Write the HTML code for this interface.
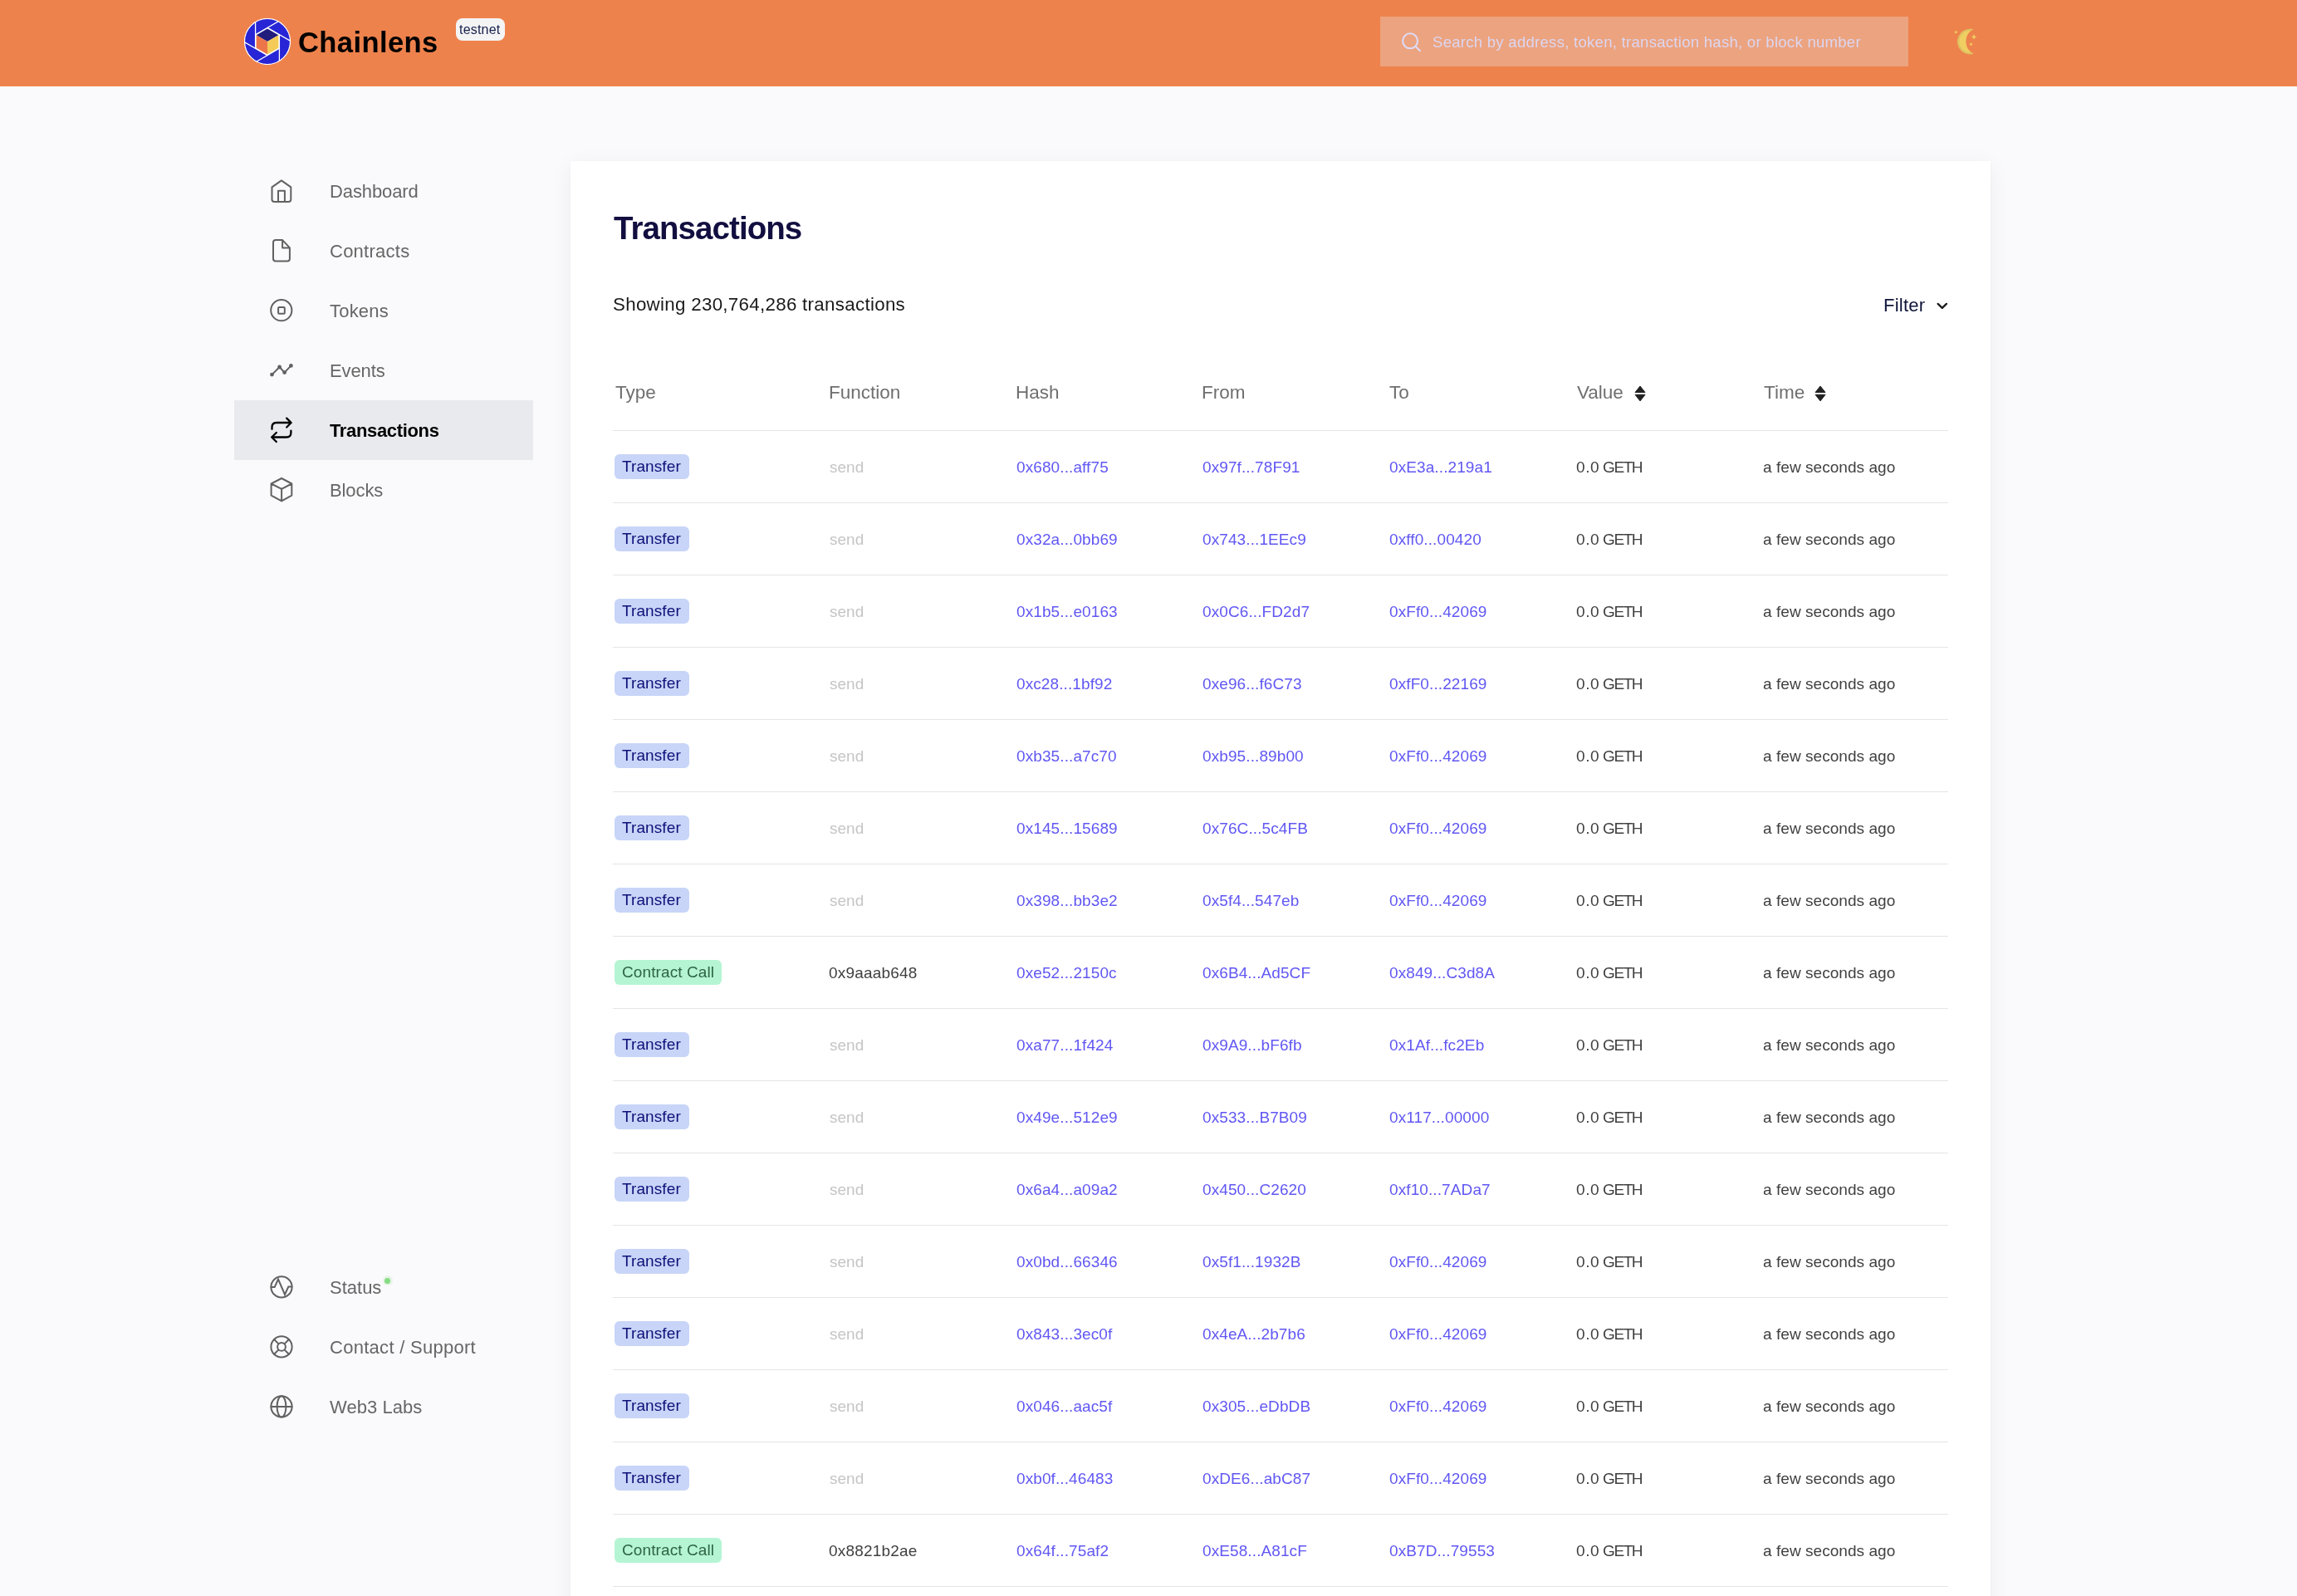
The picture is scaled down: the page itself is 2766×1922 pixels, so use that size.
<!DOCTYPE html>
<html><head><meta charset="utf-8"><title>Chainlens - Transactions</title>
<style>
html,body{margin:0;padding:0;}
body{-webkit-font-smoothing:antialiased;width:2766px;height:1922px;overflow:hidden;position:relative;background:#FAFAFC;font-family:"Liberation Sans", sans-serif;}
.abs{position:absolute;}
.t{position:absolute;white-space:nowrap;will-change:transform;}
#hdr{position:absolute;left:0;top:0;width:2766px;height:104px;background:#EE824C;}
#card{position:absolute;left:687px;top:194px;width:1710px;height:1800px;background:#fff;box-shadow:0 6px 26px rgba(20,20,50,0.055), 0 1px 3px rgba(0,0,0,0.03);}
@media (max-width:1500px){html{zoom:0.5;}}
@media (min-width:1501px) and (max-width:2000px){html{zoom:0.666667;}}
</style></head>
<body>
<div id="hdr"></div>
<svg class="abs" style="left:294px;top:22px" width="56" height="56" viewBox="0 0 56 56">
<defs><clipPath id="cc"><circle cx="28" cy="28" r="27.3"/></clipPath></defs>
<circle cx="28" cy="28" r="27.5" fill="#2725D5" stroke="#fff" stroke-width="1.2"/>
<g clip-path="url(#cc)" stroke="#fff" stroke-width="1.3" fill="none">
<polygon points="28,11.4 42.4,19.7 42.4,36.3 28,44.6 13.6,36.3 13.6,19.7" fill="#fff" stroke="none"/>
<polygon points="28,12.5 41.5,20.2 28,28 14.5,20.2" fill="#221C7C" stroke="none"/>
<polygon points="14.5,20.2 28,28 28,43.6 14.5,35.8" fill="#EC7649" stroke="none"/>
<polygon points="41.5,20.2 28,28 28,43.6 41.5,35.8" fill="#F4CB56" stroke="none"/>
<line x1="13.6" y1="36.3" x2="13.6" y2="-5"/>
<line x1="13.6" y1="19.7" x2="60" y2="-7.1"/>
<line x1="28" y1="11.4" x2="70" y2="35.65"/>
<line x1="42.4" y1="19.7" x2="42.4" y2="61"/>
<line x1="42.4" y1="36.3" x2="-4" y2="63.1"/>
<line x1="28" y1="44.6" x2="-14" y2="20.35"/>
</g>
</svg>
<div class="t" style="left:358.80px;top:33.88px;font-size:34.5px;line-height:34.5px;font-weight:700;color:#000;letter-spacing:0.42px;">Chainlens</div>
<div class="abs" style="left:549px;top:22px;width:59px;height:27px;border-radius:8px;background:#F4F4F5"></div>
<div class="t" style="left:553.30px;top:28.40px;font-size:16px;line-height:16px;font-weight:400;color:#16204A;letter-spacing:0.2px;">testnet</div>
<div class="abs" style="left:1662px;top:20px;width:636px;height:60px;background:#ECA37F"></div>
<svg class="abs" style="left:1680px;top:30px" width="40" height="40" viewBox="0 0 40 40">
<circle cx="18.1" cy="19.3" r="9" fill="none" stroke="#DEDBF5" stroke-width="2.1"/>
<line x1="24.6" y1="25.8" x2="30" y2="31.2" stroke="#DEDBF5" stroke-width="2.1" stroke-linecap="round"/>
</svg>
<div class="t" style="left:1725.00px;top:42.07px;font-size:18.5px;line-height:18.5px;font-weight:400;color:#DCD6F1;letter-spacing:0.29px;">Search by address, token, transaction hash, or block number</div>
<svg class="abs" style="left:2340px;top:25px" width="55" height="50" viewBox="0 0 55 50">
<defs><clipPath id="mc"><path d="M36.3 10.35 A15.23 15.23 0 1 0 36.5 39.75 A16.45 16.45 0 0 1 36.3 10.35 Z"/></clipPath></defs><path d="M36.3 10.35 A15.23 15.23 0 1 0 36.5 39.75 A16.45 16.45 0 0 1 36.3 10.35 Z" fill="#EFCF62"/><circle cx="32.4" cy="25.05" r="15.3" fill="none" stroke="#D9BC62" stroke-width="4.2" clip-path="url(#mc)" opacity="0.85"/>
<path d="M15.3 11.6 l0.8 1.4 l1.4 0.8 l-1.4 0.8 l-0.8 1.4 l-0.8 -1.4 l-1.4 -0.8 l1.4 -0.8 Z" fill="#EFCF62"/>
<path d="M37 16.1 l1 2.3 l2.3 1 l-2.3 1 l-1 2.3 l-1 -2.3 l-2.3 -1 l2.3 -1 Z" fill="#EFCF62"/>
<path d="M33.4 25.9 l0.8 1.5 l1.5 0.8 l-1.5 0.8 l-0.8 1.5 l-0.8 -1.5 l-1.5 -0.8 l1.5 -0.8 Z" fill="#EFCF62"/>
</svg>
<div class="abs" style="left:282px;top:482px;width:360px;height:72px;background:#E9EAEE"></div>
<svg class="abs" style="left:315px;top:205px" width="50" height="50" viewBox="0 0 50 50" fill="none" stroke="#616161" stroke-width="2" stroke-linecap="round" stroke-linejoin="round"><path d="M12.5 20.4 L23.9 12.4 L35.3 20.4 V35 Q35.3 37.9 32.4 37.9 H15.4 Q12.5 37.9 12.5 35 Z M20 37.9 V24.8 H27.9 V37.9"/></svg>
<div class="t" style="left:396.50px;top:220.10px;font-size:22px;line-height:22px;font-weight:400;color:#666;letter-spacing:-0.1px;">Dashboard</div>
<svg class="abs" style="left:315px;top:277px" width="50" height="50" viewBox="0 0 50 50" fill="none" stroke="#616161" stroke-width="2" stroke-linecap="round" stroke-linejoin="round"><path d="M25.1 12.1 H17 Q14 12.1 14 15.1 V34.6 Q14 37.6 17 37.6 H30.9 Q33.9 37.6 33.9 34.6 V21.4 Z M25.1 12.1 V21.4 H33.9"/></svg>
<div class="t" style="left:396.50px;top:292.10px;font-size:22px;line-height:22px;font-weight:400;color:#666;letter-spacing:0.25px;">Contracts</div>
<svg class="abs" style="left:315px;top:349px" width="50" height="50" viewBox="0 0 50 50" fill="none" stroke="#616161" stroke-width="2" stroke-linecap="round" stroke-linejoin="round"><circle cx="23.8" cy="24.7" r="12.6"/><rect x="20.1" y="21.05" width="7.7" height="7.7" rx="1"/></svg>
<div class="t" style="left:396.50px;top:364.10px;font-size:22px;line-height:22px;font-weight:400;color:#666;letter-spacing:0.2px;">Tokens</div>
<svg class="abs" style="left:315px;top:421px" width="50" height="50" viewBox="0 0 50 50" fill="none" stroke="#616161" stroke-width="2" stroke-linecap="round" stroke-linejoin="round"><path d="M12.5 30.1 L21.6 21 L27.6 27.6 L35.4 19.4"/><circle cx="12.5" cy="30.1" r="1.4" fill="#616161"/><circle cx="21.6" cy="21" r="1.4" fill="#616161"/><circle cx="27.6" cy="27.6" r="1.4" fill="#616161"/><circle cx="35.4" cy="19.4" r="1.4" fill="#616161"/></svg>
<div class="t" style="left:396.50px;top:436.10px;font-size:22px;line-height:22px;font-weight:400;color:#666;letter-spacing:-0.1px;">Events</div>
<svg class="abs" style="left:315px;top:493px" width="50" height="50" viewBox="0 0 50 50" fill="none" stroke="#000" stroke-width="2.3" stroke-linecap="round" stroke-linejoin="round"><path d="M12.5 23.8 V21.5 Q12.5 16 18 16 H35.5 M30.2 10.6 L35.6 16 L30.2 21.5 M35.4 25.7 V28 Q35.4 33.5 30 33.5 H12.2 M17.8 28 L12.2 33.5 L17.8 39"/></svg>
<div class="t" style="left:396.50px;top:508.10px;font-size:22px;line-height:22px;font-weight:700;color:#000;letter-spacing:-0.35px;">Transactions</div>
<svg class="abs" style="left:315px;top:565px" width="50" height="50" viewBox="0 0 50 50" fill="none" stroke="#616161" stroke-width="2" stroke-linecap="round" stroke-linejoin="round"><path d="M24.1 11 L36.3 17.5 V31.6 L24.1 38.4 L11.6 31.6 V17.5 Z M11.6 17.5 L24.1 23.8 L36.3 17.5 M24.1 23.8 V38.4"/></svg>
<div class="t" style="left:396.50px;top:580.10px;font-size:22px;line-height:22px;font-weight:400;color:#666;letter-spacing:-0.1px;">Blocks</div>
<svg class="abs" style="left:315px;top:1525px" width="50" height="50" viewBox="0 0 50 50" fill="none" stroke="#616161" stroke-width="2" stroke-linecap="round" stroke-linejoin="round"><circle cx="24" cy="24.9" r="12.6"/><path d="M11.5 24.9 H15.7 L20 15.5 L28 34 L32.3 24.5 H36.5" stroke-linejoin="miter"/></svg>
<div class="t" style="left:396.50px;top:1540.10px;font-size:22px;line-height:22px;font-weight:400;color:#666;letter-spacing:0px;">Status</div>
<svg class="abs" style="left:315px;top:1597px" width="50" height="50" viewBox="0 0 50 50" fill="none" stroke="#616161" stroke-width="2" stroke-linecap="round" stroke-linejoin="round"><circle cx="24" cy="24.9" r="12.6"/><circle cx="24" cy="24.9" r="4.9"/><path d="M20.5 21.4 L15.1 16 M27.5 21.4 L32.9 16 M20.5 28.4 L15.1 33.8 M27.5 28.4 L32.9 33.8"/></svg>
<div class="t" style="left:396.50px;top:1612.10px;font-size:22px;line-height:22px;font-weight:400;color:#666;letter-spacing:0.28px;">Contact / Support</div>
<svg class="abs" style="left:315px;top:1669px" width="50" height="50" viewBox="0 0 50 50" fill="none" stroke="#616161" stroke-width="2" stroke-linecap="round" stroke-linejoin="round"><circle cx="24" cy="24.9" r="12.6"/><ellipse cx="24" cy="24.9" rx="5.4" ry="12.6"/><path d="M11.4 24.9 H36.6"/></svg>
<div class="t" style="left:396.50px;top:1684.10px;font-size:22px;line-height:22px;font-weight:400;color:#666;letter-spacing:0.05px;">Web3 Labs</div>
<div class="abs" style="left:460.5px;top:1536px;width:12px;height:12px;border-radius:50%;background:#E6F4E6"></div>
<div class="abs" style="left:463px;top:1538.5px;width:7px;height:7px;border-radius:50%;background:#86DC84"></div>
<div id="card"></div>
<div class="t" style="left:739.00px;top:256.38px;font-size:38.5px;line-height:38.5px;font-weight:700;color:#120F40;letter-spacing:-0.93px;">Transactions</div>
<div class="t" style="left:738.20px;top:356.05px;font-size:22.3px;line-height:22.3px;font-weight:400;color:#1A1A1A;letter-spacing:0.31px;">Showing 230,764,286 transactions</div>
<div class="t" style="left:2267.50px;top:357.20px;font-size:22px;line-height:22px;font-weight:400;color:#0F1538;letter-spacing:0.25px;">Filter</div>
<svg class="abs" style="left:2328px;top:360px" width="20" height="16" viewBox="0 0 20 16"><path d="M5.6 5.9 L10.75 10.9 L15.9 5.9" fill="none" stroke="#1A1A1A" stroke-width="2.3" stroke-linecap="round" stroke-linejoin="round"/></svg>
<div class="t" style="left:740.50px;top:461.88px;font-size:22.5px;line-height:22.5px;font-weight:400;color:#6F6F6F;letter-spacing:0px;">Type</div>
<div class="t" style="left:998.10px;top:461.88px;font-size:22.5px;line-height:22.5px;font-weight:400;color:#6F6F6F;letter-spacing:0px;">Function</div>
<div class="t" style="left:1223.30px;top:461.88px;font-size:22.5px;line-height:22.5px;font-weight:400;color:#6F6F6F;letter-spacing:0px;">Hash</div>
<div class="t" style="left:1447.10px;top:461.88px;font-size:22.5px;line-height:22.5px;font-weight:400;color:#6F6F6F;letter-spacing:0px;">From</div>
<div class="t" style="left:1673.30px;top:461.88px;font-size:22.5px;line-height:22.5px;font-weight:400;color:#6F6F6F;letter-spacing:0px;">To</div>
<div class="t" style="left:1898.50px;top:461.88px;font-size:22.5px;line-height:22.5px;font-weight:400;color:#6F6F6F;letter-spacing:0px;">Value</div>
<div class="t" style="left:2123.50px;top:461.88px;font-size:22.5px;line-height:22.5px;font-weight:400;color:#6F6F6F;letter-spacing:0px;">Time</div>
<svg class="abs" style="left:1967px;top:463px" width="16" height="22" viewBox="0 0 16 22"><path d="M8 2 L14 9.5 H2 Z M2 12.3 H14 L8 19.9 Z" fill="#222" stroke="#222" stroke-width="1" stroke-linejoin="round"/></svg>
<svg class="abs" style="left:2184px;top:463px" width="16" height="22" viewBox="0 0 16 22"><path d="M8 2 L14 9.5 H2 Z M2 12.3 H14 L8 19.9 Z" fill="#222" stroke="#222" stroke-width="1" stroke-linejoin="round"/></svg>
<div class="abs" style="left:738px;top:518px;width:1608px;height:1px;background:#E5E5E7"></div>
<div class="abs" style="left:740px;top:547px;width:90px;height:30px;border-radius:6px;background:#C8D5F8"></div>
<div class="t" style="left:748.50px;top:551.65px;font-size:19px;line-height:19px;font-weight:400;color:#0F0F78;letter-spacing:0.1px;">Transfer</div>
<div class="t" style="left:999.00px;top:552.85px;font-size:19px;line-height:19px;font-weight:400;color:#C5C5C5;letter-spacing:0px;">send</div>
<div class="t" style="left:1223.90px;top:552.85px;font-size:19px;line-height:19px;font-weight:400;color:#6157F3;letter-spacing:0.1px;">0x680...aff75</div>
<div class="t" style="left:1448.30px;top:552.85px;font-size:19px;line-height:19px;font-weight:400;color:#6157F3;letter-spacing:0.1px;">0x97f...78F91</div>
<div class="t" style="left:1672.90px;top:552.85px;font-size:19px;line-height:19px;font-weight:400;color:#6157F3;letter-spacing:0.1px;">0xE3a...219a1</div>
<div class="t" style="left:1897.80px;top:552.85px;font-size:19px;line-height:19px;font-weight:400;color:#3F3F3F;letter-spacing:0.6px;">0.0</div>
<div class="t" style="left:1930.40px;top:552.85px;font-size:19px;line-height:19px;font-weight:400;color:#3F3F3F;letter-spacing:-1.4px;">GETH</div>
<div class="t" style="left:2123.00px;top:552.85px;font-size:19px;line-height:19px;font-weight:400;color:#3F3F3F;letter-spacing:0.05px;">a few seconds ago</div>
<div class="abs" style="left:738px;top:605px;width:1608px;height:1px;background:#E5E5E7"></div>
<div class="abs" style="left:740px;top:634px;width:90px;height:30px;border-radius:6px;background:#C8D5F8"></div>
<div class="t" style="left:748.50px;top:638.65px;font-size:19px;line-height:19px;font-weight:400;color:#0F0F78;letter-spacing:0.1px;">Transfer</div>
<div class="t" style="left:999.00px;top:639.85px;font-size:19px;line-height:19px;font-weight:400;color:#C5C5C5;letter-spacing:0px;">send</div>
<div class="t" style="left:1223.90px;top:639.85px;font-size:19px;line-height:19px;font-weight:400;color:#6157F3;letter-spacing:0.1px;">0x32a...0bb69</div>
<div class="t" style="left:1448.30px;top:639.85px;font-size:19px;line-height:19px;font-weight:400;color:#6157F3;letter-spacing:0.1px;">0x743...1EEc9</div>
<div class="t" style="left:1672.90px;top:639.85px;font-size:19px;line-height:19px;font-weight:400;color:#6157F3;letter-spacing:0.1px;">0xff0...00420</div>
<div class="t" style="left:1897.80px;top:639.85px;font-size:19px;line-height:19px;font-weight:400;color:#3F3F3F;letter-spacing:0.6px;">0.0</div>
<div class="t" style="left:1930.40px;top:639.85px;font-size:19px;line-height:19px;font-weight:400;color:#3F3F3F;letter-spacing:-1.4px;">GETH</div>
<div class="t" style="left:2123.00px;top:639.85px;font-size:19px;line-height:19px;font-weight:400;color:#3F3F3F;letter-spacing:0.05px;">a few seconds ago</div>
<div class="abs" style="left:738px;top:692px;width:1608px;height:1px;background:#E5E5E7"></div>
<div class="abs" style="left:740px;top:721px;width:90px;height:30px;border-radius:6px;background:#C8D5F8"></div>
<div class="t" style="left:748.50px;top:725.65px;font-size:19px;line-height:19px;font-weight:400;color:#0F0F78;letter-spacing:0.1px;">Transfer</div>
<div class="t" style="left:999.00px;top:726.85px;font-size:19px;line-height:19px;font-weight:400;color:#C5C5C5;letter-spacing:0px;">send</div>
<div class="t" style="left:1223.90px;top:726.85px;font-size:19px;line-height:19px;font-weight:400;color:#6157F3;letter-spacing:0.1px;">0x1b5...e0163</div>
<div class="t" style="left:1448.30px;top:726.85px;font-size:19px;line-height:19px;font-weight:400;color:#6157F3;letter-spacing:0.1px;">0x0C6...FD2d7</div>
<div class="t" style="left:1672.90px;top:726.85px;font-size:19px;line-height:19px;font-weight:400;color:#6157F3;letter-spacing:0.1px;">0xFf0...42069</div>
<div class="t" style="left:1897.80px;top:726.85px;font-size:19px;line-height:19px;font-weight:400;color:#3F3F3F;letter-spacing:0.6px;">0.0</div>
<div class="t" style="left:1930.40px;top:726.85px;font-size:19px;line-height:19px;font-weight:400;color:#3F3F3F;letter-spacing:-1.4px;">GETH</div>
<div class="t" style="left:2123.00px;top:726.85px;font-size:19px;line-height:19px;font-weight:400;color:#3F3F3F;letter-spacing:0.05px;">a few seconds ago</div>
<div class="abs" style="left:738px;top:779px;width:1608px;height:1px;background:#E5E5E7"></div>
<div class="abs" style="left:740px;top:808px;width:90px;height:30px;border-radius:6px;background:#C8D5F8"></div>
<div class="t" style="left:748.50px;top:812.65px;font-size:19px;line-height:19px;font-weight:400;color:#0F0F78;letter-spacing:0.1px;">Transfer</div>
<div class="t" style="left:999.00px;top:813.85px;font-size:19px;line-height:19px;font-weight:400;color:#C5C5C5;letter-spacing:0px;">send</div>
<div class="t" style="left:1223.90px;top:813.85px;font-size:19px;line-height:19px;font-weight:400;color:#6157F3;letter-spacing:0.1px;">0xc28...1bf92</div>
<div class="t" style="left:1448.30px;top:813.85px;font-size:19px;line-height:19px;font-weight:400;color:#6157F3;letter-spacing:0.1px;">0xe96...f6C73</div>
<div class="t" style="left:1672.90px;top:813.85px;font-size:19px;line-height:19px;font-weight:400;color:#6157F3;letter-spacing:0.1px;">0xfF0...22169</div>
<div class="t" style="left:1897.80px;top:813.85px;font-size:19px;line-height:19px;font-weight:400;color:#3F3F3F;letter-spacing:0.6px;">0.0</div>
<div class="t" style="left:1930.40px;top:813.85px;font-size:19px;line-height:19px;font-weight:400;color:#3F3F3F;letter-spacing:-1.4px;">GETH</div>
<div class="t" style="left:2123.00px;top:813.85px;font-size:19px;line-height:19px;font-weight:400;color:#3F3F3F;letter-spacing:0.05px;">a few seconds ago</div>
<div class="abs" style="left:738px;top:866px;width:1608px;height:1px;background:#E5E5E7"></div>
<div class="abs" style="left:740px;top:895px;width:90px;height:30px;border-radius:6px;background:#C8D5F8"></div>
<div class="t" style="left:748.50px;top:899.65px;font-size:19px;line-height:19px;font-weight:400;color:#0F0F78;letter-spacing:0.1px;">Transfer</div>
<div class="t" style="left:999.00px;top:900.85px;font-size:19px;line-height:19px;font-weight:400;color:#C5C5C5;letter-spacing:0px;">send</div>
<div class="t" style="left:1223.90px;top:900.85px;font-size:19px;line-height:19px;font-weight:400;color:#6157F3;letter-spacing:0.1px;">0xb35...a7c70</div>
<div class="t" style="left:1448.30px;top:900.85px;font-size:19px;line-height:19px;font-weight:400;color:#6157F3;letter-spacing:0.1px;">0xb95...89b00</div>
<div class="t" style="left:1672.90px;top:900.85px;font-size:19px;line-height:19px;font-weight:400;color:#6157F3;letter-spacing:0.1px;">0xFf0...42069</div>
<div class="t" style="left:1897.80px;top:900.85px;font-size:19px;line-height:19px;font-weight:400;color:#3F3F3F;letter-spacing:0.6px;">0.0</div>
<div class="t" style="left:1930.40px;top:900.85px;font-size:19px;line-height:19px;font-weight:400;color:#3F3F3F;letter-spacing:-1.4px;">GETH</div>
<div class="t" style="left:2123.00px;top:900.85px;font-size:19px;line-height:19px;font-weight:400;color:#3F3F3F;letter-spacing:0.05px;">a few seconds ago</div>
<div class="abs" style="left:738px;top:953px;width:1608px;height:1px;background:#E5E5E7"></div>
<div class="abs" style="left:740px;top:982px;width:90px;height:30px;border-radius:6px;background:#C8D5F8"></div>
<div class="t" style="left:748.50px;top:986.65px;font-size:19px;line-height:19px;font-weight:400;color:#0F0F78;letter-spacing:0.1px;">Transfer</div>
<div class="t" style="left:999.00px;top:987.85px;font-size:19px;line-height:19px;font-weight:400;color:#C5C5C5;letter-spacing:0px;">send</div>
<div class="t" style="left:1223.90px;top:987.85px;font-size:19px;line-height:19px;font-weight:400;color:#6157F3;letter-spacing:0.1px;">0x145...15689</div>
<div class="t" style="left:1448.30px;top:987.85px;font-size:19px;line-height:19px;font-weight:400;color:#6157F3;letter-spacing:0.1px;">0x76C...5c4FB</div>
<div class="t" style="left:1672.90px;top:987.85px;font-size:19px;line-height:19px;font-weight:400;color:#6157F3;letter-spacing:0.1px;">0xFf0...42069</div>
<div class="t" style="left:1897.80px;top:987.85px;font-size:19px;line-height:19px;font-weight:400;color:#3F3F3F;letter-spacing:0.6px;">0.0</div>
<div class="t" style="left:1930.40px;top:987.85px;font-size:19px;line-height:19px;font-weight:400;color:#3F3F3F;letter-spacing:-1.4px;">GETH</div>
<div class="t" style="left:2123.00px;top:987.85px;font-size:19px;line-height:19px;font-weight:400;color:#3F3F3F;letter-spacing:0.05px;">a few seconds ago</div>
<div class="abs" style="left:738px;top:1040px;width:1608px;height:1px;background:#E5E5E7"></div>
<div class="abs" style="left:740px;top:1069px;width:90px;height:30px;border-radius:6px;background:#C8D5F8"></div>
<div class="t" style="left:748.50px;top:1073.65px;font-size:19px;line-height:19px;font-weight:400;color:#0F0F78;letter-spacing:0.1px;">Transfer</div>
<div class="t" style="left:999.00px;top:1074.85px;font-size:19px;line-height:19px;font-weight:400;color:#C5C5C5;letter-spacing:0px;">send</div>
<div class="t" style="left:1223.90px;top:1074.85px;font-size:19px;line-height:19px;font-weight:400;color:#6157F3;letter-spacing:0.1px;">0x398...bb3e2</div>
<div class="t" style="left:1448.30px;top:1074.85px;font-size:19px;line-height:19px;font-weight:400;color:#6157F3;letter-spacing:0.1px;">0x5f4...547eb</div>
<div class="t" style="left:1672.90px;top:1074.85px;font-size:19px;line-height:19px;font-weight:400;color:#6157F3;letter-spacing:0.1px;">0xFf0...42069</div>
<div class="t" style="left:1897.80px;top:1074.85px;font-size:19px;line-height:19px;font-weight:400;color:#3F3F3F;letter-spacing:0.6px;">0.0</div>
<div class="t" style="left:1930.40px;top:1074.85px;font-size:19px;line-height:19px;font-weight:400;color:#3F3F3F;letter-spacing:-1.4px;">GETH</div>
<div class="t" style="left:2123.00px;top:1074.85px;font-size:19px;line-height:19px;font-weight:400;color:#3F3F3F;letter-spacing:0.05px;">a few seconds ago</div>
<div class="abs" style="left:738px;top:1127px;width:1608px;height:1px;background:#E5E5E7"></div>
<div class="abs" style="left:740px;top:1156px;width:129px;height:30px;border-radius:6px;background:#B5F5D4"></div>
<div class="t" style="left:748.50px;top:1160.65px;font-size:19px;line-height:19px;font-weight:400;color:#2E6442;letter-spacing:0.1px;">Contract Call</div>
<div class="t" style="left:998.00px;top:1161.85px;font-size:19px;line-height:19px;font-weight:400;color:#3F3F3F;letter-spacing:0.2px;">0x9aaab648</div>
<div class="t" style="left:1223.90px;top:1161.85px;font-size:19px;line-height:19px;font-weight:400;color:#6157F3;letter-spacing:0.1px;">0xe52...2150c</div>
<div class="t" style="left:1448.30px;top:1161.85px;font-size:19px;line-height:19px;font-weight:400;color:#6157F3;letter-spacing:0.1px;">0x6B4...Ad5CF</div>
<div class="t" style="left:1672.90px;top:1161.85px;font-size:19px;line-height:19px;font-weight:400;color:#6157F3;letter-spacing:0.1px;">0x849...C3d8A</div>
<div class="t" style="left:1897.80px;top:1161.85px;font-size:19px;line-height:19px;font-weight:400;color:#3F3F3F;letter-spacing:0.6px;">0.0</div>
<div class="t" style="left:1930.40px;top:1161.85px;font-size:19px;line-height:19px;font-weight:400;color:#3F3F3F;letter-spacing:-1.4px;">GETH</div>
<div class="t" style="left:2123.00px;top:1161.85px;font-size:19px;line-height:19px;font-weight:400;color:#3F3F3F;letter-spacing:0.05px;">a few seconds ago</div>
<div class="abs" style="left:738px;top:1214px;width:1608px;height:1px;background:#E5E5E7"></div>
<div class="abs" style="left:740px;top:1243px;width:90px;height:30px;border-radius:6px;background:#C8D5F8"></div>
<div class="t" style="left:748.50px;top:1247.65px;font-size:19px;line-height:19px;font-weight:400;color:#0F0F78;letter-spacing:0.1px;">Transfer</div>
<div class="t" style="left:999.00px;top:1248.85px;font-size:19px;line-height:19px;font-weight:400;color:#C5C5C5;letter-spacing:0px;">send</div>
<div class="t" style="left:1223.90px;top:1248.85px;font-size:19px;line-height:19px;font-weight:400;color:#6157F3;letter-spacing:0.1px;">0xa77...1f424</div>
<div class="t" style="left:1448.30px;top:1248.85px;font-size:19px;line-height:19px;font-weight:400;color:#6157F3;letter-spacing:0.1px;">0x9A9...bF6fb</div>
<div class="t" style="left:1672.90px;top:1248.85px;font-size:19px;line-height:19px;font-weight:400;color:#6157F3;letter-spacing:0.1px;">0x1Af...fc2Eb</div>
<div class="t" style="left:1897.80px;top:1248.85px;font-size:19px;line-height:19px;font-weight:400;color:#3F3F3F;letter-spacing:0.6px;">0.0</div>
<div class="t" style="left:1930.40px;top:1248.85px;font-size:19px;line-height:19px;font-weight:400;color:#3F3F3F;letter-spacing:-1.4px;">GETH</div>
<div class="t" style="left:2123.00px;top:1248.85px;font-size:19px;line-height:19px;font-weight:400;color:#3F3F3F;letter-spacing:0.05px;">a few seconds ago</div>
<div class="abs" style="left:738px;top:1301px;width:1608px;height:1px;background:#E5E5E7"></div>
<div class="abs" style="left:740px;top:1330px;width:90px;height:30px;border-radius:6px;background:#C8D5F8"></div>
<div class="t" style="left:748.50px;top:1334.65px;font-size:19px;line-height:19px;font-weight:400;color:#0F0F78;letter-spacing:0.1px;">Transfer</div>
<div class="t" style="left:999.00px;top:1335.85px;font-size:19px;line-height:19px;font-weight:400;color:#C5C5C5;letter-spacing:0px;">send</div>
<div class="t" style="left:1223.90px;top:1335.85px;font-size:19px;line-height:19px;font-weight:400;color:#6157F3;letter-spacing:0.1px;">0x49e...512e9</div>
<div class="t" style="left:1448.30px;top:1335.85px;font-size:19px;line-height:19px;font-weight:400;color:#6157F3;letter-spacing:0.1px;">0x533...B7B09</div>
<div class="t" style="left:1672.90px;top:1335.85px;font-size:19px;line-height:19px;font-weight:400;color:#6157F3;letter-spacing:0.1px;">0x117...00000</div>
<div class="t" style="left:1897.80px;top:1335.85px;font-size:19px;line-height:19px;font-weight:400;color:#3F3F3F;letter-spacing:0.6px;">0.0</div>
<div class="t" style="left:1930.40px;top:1335.85px;font-size:19px;line-height:19px;font-weight:400;color:#3F3F3F;letter-spacing:-1.4px;">GETH</div>
<div class="t" style="left:2123.00px;top:1335.85px;font-size:19px;line-height:19px;font-weight:400;color:#3F3F3F;letter-spacing:0.05px;">a few seconds ago</div>
<div class="abs" style="left:738px;top:1388px;width:1608px;height:1px;background:#E5E5E7"></div>
<div class="abs" style="left:740px;top:1417px;width:90px;height:30px;border-radius:6px;background:#C8D5F8"></div>
<div class="t" style="left:748.50px;top:1421.65px;font-size:19px;line-height:19px;font-weight:400;color:#0F0F78;letter-spacing:0.1px;">Transfer</div>
<div class="t" style="left:999.00px;top:1422.85px;font-size:19px;line-height:19px;font-weight:400;color:#C5C5C5;letter-spacing:0px;">send</div>
<div class="t" style="left:1223.90px;top:1422.85px;font-size:19px;line-height:19px;font-weight:400;color:#6157F3;letter-spacing:0.1px;">0x6a4...a09a2</div>
<div class="t" style="left:1448.30px;top:1422.85px;font-size:19px;line-height:19px;font-weight:400;color:#6157F3;letter-spacing:0.1px;">0x450...C2620</div>
<div class="t" style="left:1672.90px;top:1422.85px;font-size:19px;line-height:19px;font-weight:400;color:#6157F3;letter-spacing:0.1px;">0xf10...7ADa7</div>
<div class="t" style="left:1897.80px;top:1422.85px;font-size:19px;line-height:19px;font-weight:400;color:#3F3F3F;letter-spacing:0.6px;">0.0</div>
<div class="t" style="left:1930.40px;top:1422.85px;font-size:19px;line-height:19px;font-weight:400;color:#3F3F3F;letter-spacing:-1.4px;">GETH</div>
<div class="t" style="left:2123.00px;top:1422.85px;font-size:19px;line-height:19px;font-weight:400;color:#3F3F3F;letter-spacing:0.05px;">a few seconds ago</div>
<div class="abs" style="left:738px;top:1475px;width:1608px;height:1px;background:#E5E5E7"></div>
<div class="abs" style="left:740px;top:1504px;width:90px;height:30px;border-radius:6px;background:#C8D5F8"></div>
<div class="t" style="left:748.50px;top:1508.65px;font-size:19px;line-height:19px;font-weight:400;color:#0F0F78;letter-spacing:0.1px;">Transfer</div>
<div class="t" style="left:999.00px;top:1509.85px;font-size:19px;line-height:19px;font-weight:400;color:#C5C5C5;letter-spacing:0px;">send</div>
<div class="t" style="left:1223.90px;top:1509.85px;font-size:19px;line-height:19px;font-weight:400;color:#6157F3;letter-spacing:0.1px;">0x0bd...66346</div>
<div class="t" style="left:1448.30px;top:1509.85px;font-size:19px;line-height:19px;font-weight:400;color:#6157F3;letter-spacing:0.1px;">0x5f1...1932B</div>
<div class="t" style="left:1672.90px;top:1509.85px;font-size:19px;line-height:19px;font-weight:400;color:#6157F3;letter-spacing:0.1px;">0xFf0...42069</div>
<div class="t" style="left:1897.80px;top:1509.85px;font-size:19px;line-height:19px;font-weight:400;color:#3F3F3F;letter-spacing:0.6px;">0.0</div>
<div class="t" style="left:1930.40px;top:1509.85px;font-size:19px;line-height:19px;font-weight:400;color:#3F3F3F;letter-spacing:-1.4px;">GETH</div>
<div class="t" style="left:2123.00px;top:1509.85px;font-size:19px;line-height:19px;font-weight:400;color:#3F3F3F;letter-spacing:0.05px;">a few seconds ago</div>
<div class="abs" style="left:738px;top:1562px;width:1608px;height:1px;background:#E5E5E7"></div>
<div class="abs" style="left:740px;top:1591px;width:90px;height:30px;border-radius:6px;background:#C8D5F8"></div>
<div class="t" style="left:748.50px;top:1595.65px;font-size:19px;line-height:19px;font-weight:400;color:#0F0F78;letter-spacing:0.1px;">Transfer</div>
<div class="t" style="left:999.00px;top:1596.85px;font-size:19px;line-height:19px;font-weight:400;color:#C5C5C5;letter-spacing:0px;">send</div>
<div class="t" style="left:1223.90px;top:1596.85px;font-size:19px;line-height:19px;font-weight:400;color:#6157F3;letter-spacing:0.1px;">0x843...3ec0f</div>
<div class="t" style="left:1448.30px;top:1596.85px;font-size:19px;line-height:19px;font-weight:400;color:#6157F3;letter-spacing:0.1px;">0x4eA...2b7b6</div>
<div class="t" style="left:1672.90px;top:1596.85px;font-size:19px;line-height:19px;font-weight:400;color:#6157F3;letter-spacing:0.1px;">0xFf0...42069</div>
<div class="t" style="left:1897.80px;top:1596.85px;font-size:19px;line-height:19px;font-weight:400;color:#3F3F3F;letter-spacing:0.6px;">0.0</div>
<div class="t" style="left:1930.40px;top:1596.85px;font-size:19px;line-height:19px;font-weight:400;color:#3F3F3F;letter-spacing:-1.4px;">GETH</div>
<div class="t" style="left:2123.00px;top:1596.85px;font-size:19px;line-height:19px;font-weight:400;color:#3F3F3F;letter-spacing:0.05px;">a few seconds ago</div>
<div class="abs" style="left:738px;top:1649px;width:1608px;height:1px;background:#E5E5E7"></div>
<div class="abs" style="left:740px;top:1678px;width:90px;height:30px;border-radius:6px;background:#C8D5F8"></div>
<div class="t" style="left:748.50px;top:1682.65px;font-size:19px;line-height:19px;font-weight:400;color:#0F0F78;letter-spacing:0.1px;">Transfer</div>
<div class="t" style="left:999.00px;top:1683.85px;font-size:19px;line-height:19px;font-weight:400;color:#C5C5C5;letter-spacing:0px;">send</div>
<div class="t" style="left:1223.90px;top:1683.85px;font-size:19px;line-height:19px;font-weight:400;color:#6157F3;letter-spacing:0.1px;">0x046...aac5f</div>
<div class="t" style="left:1448.30px;top:1683.85px;font-size:19px;line-height:19px;font-weight:400;color:#6157F3;letter-spacing:0.1px;">0x305...eDbDB</div>
<div class="t" style="left:1672.90px;top:1683.85px;font-size:19px;line-height:19px;font-weight:400;color:#6157F3;letter-spacing:0.1px;">0xFf0...42069</div>
<div class="t" style="left:1897.80px;top:1683.85px;font-size:19px;line-height:19px;font-weight:400;color:#3F3F3F;letter-spacing:0.6px;">0.0</div>
<div class="t" style="left:1930.40px;top:1683.85px;font-size:19px;line-height:19px;font-weight:400;color:#3F3F3F;letter-spacing:-1.4px;">GETH</div>
<div class="t" style="left:2123.00px;top:1683.85px;font-size:19px;line-height:19px;font-weight:400;color:#3F3F3F;letter-spacing:0.05px;">a few seconds ago</div>
<div class="abs" style="left:738px;top:1736px;width:1608px;height:1px;background:#E5E5E7"></div>
<div class="abs" style="left:740px;top:1765px;width:90px;height:30px;border-radius:6px;background:#C8D5F8"></div>
<div class="t" style="left:748.50px;top:1769.65px;font-size:19px;line-height:19px;font-weight:400;color:#0F0F78;letter-spacing:0.1px;">Transfer</div>
<div class="t" style="left:999.00px;top:1770.85px;font-size:19px;line-height:19px;font-weight:400;color:#C5C5C5;letter-spacing:0px;">send</div>
<div class="t" style="left:1223.90px;top:1770.85px;font-size:19px;line-height:19px;font-weight:400;color:#6157F3;letter-spacing:0.1px;">0xb0f...46483</div>
<div class="t" style="left:1448.30px;top:1770.85px;font-size:19px;line-height:19px;font-weight:400;color:#6157F3;letter-spacing:0.1px;">0xDE6...abC87</div>
<div class="t" style="left:1672.90px;top:1770.85px;font-size:19px;line-height:19px;font-weight:400;color:#6157F3;letter-spacing:0.1px;">0xFf0...42069</div>
<div class="t" style="left:1897.80px;top:1770.85px;font-size:19px;line-height:19px;font-weight:400;color:#3F3F3F;letter-spacing:0.6px;">0.0</div>
<div class="t" style="left:1930.40px;top:1770.85px;font-size:19px;line-height:19px;font-weight:400;color:#3F3F3F;letter-spacing:-1.4px;">GETH</div>
<div class="t" style="left:2123.00px;top:1770.85px;font-size:19px;line-height:19px;font-weight:400;color:#3F3F3F;letter-spacing:0.05px;">a few seconds ago</div>
<div class="abs" style="left:738px;top:1823px;width:1608px;height:1px;background:#E5E5E7"></div>
<div class="abs" style="left:740px;top:1852px;width:129px;height:30px;border-radius:6px;background:#B5F5D4"></div>
<div class="t" style="left:748.50px;top:1856.65px;font-size:19px;line-height:19px;font-weight:400;color:#2E6442;letter-spacing:0.1px;">Contract Call</div>
<div class="t" style="left:998.00px;top:1857.85px;font-size:19px;line-height:19px;font-weight:400;color:#3F3F3F;letter-spacing:0.2px;">0x8821b2ae</div>
<div class="t" style="left:1223.90px;top:1857.85px;font-size:19px;line-height:19px;font-weight:400;color:#6157F3;letter-spacing:0.1px;">0x64f...75af2</div>
<div class="t" style="left:1448.30px;top:1857.85px;font-size:19px;line-height:19px;font-weight:400;color:#6157F3;letter-spacing:0.1px;">0xE58...A81cF</div>
<div class="t" style="left:1672.90px;top:1857.85px;font-size:19px;line-height:19px;font-weight:400;color:#6157F3;letter-spacing:0.1px;">0xB7D...79553</div>
<div class="t" style="left:1897.80px;top:1857.85px;font-size:19px;line-height:19px;font-weight:400;color:#3F3F3F;letter-spacing:0.6px;">0.0</div>
<div class="t" style="left:1930.40px;top:1857.85px;font-size:19px;line-height:19px;font-weight:400;color:#3F3F3F;letter-spacing:-1.4px;">GETH</div>
<div class="t" style="left:2123.00px;top:1857.85px;font-size:19px;line-height:19px;font-weight:400;color:#3F3F3F;letter-spacing:0.05px;">a few seconds ago</div>
<div class="abs" style="left:738px;top:1910px;width:1608px;height:1px;background:#E5E5E7"></div>
</body></html>
